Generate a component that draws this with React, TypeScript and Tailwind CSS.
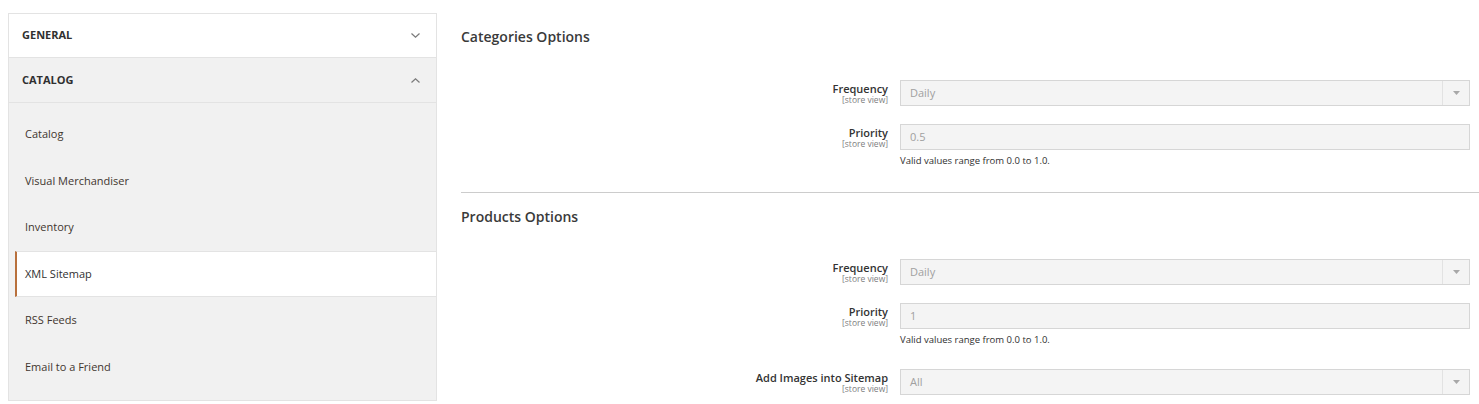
const NAV_ITEMS = [
  { label: "Catalog" },
  { label: "Visual Merchandiser" },
  { label: "Inventory" },
  { label: "XML Sitemap", active: true },
  { label: "RSS Feeds" },
  { label: "Email to a Friend" },
];

function Chevron({ up }: { up?: boolean }) {
  return (
    <svg width="9" height="5" viewBox="0 0 9 5" className="mr-[3px]">
      <path
        d={up ? "M0.5 4.5 L4.5 0.8 L8.5 4.5" : "M0.5 0.5 L4.5 4.2 L8.5 0.5"}
        fill="none"
        stroke="#7a7a7a"
        strokeWidth="1.2"
      />
    </svg>
  );
}

function Sidebar() {
  return (
    <div className="w-[429px] shrink-0 ml-2 mt-[13px] border border-[#e3e3e3] self-start">
      {/* General section (collapsed) */}
      <div className="h-[44px] flex items-center justify-between px-[13px] bg-white border-b border-[#e3e3e3]">
        <span className="text-[11px] font-bold text-[#303030]">GENERAL</span>
        <Chevron />
      </div>
      {/* Catalog section (expanded) */}
      <div className="h-[45px] flex items-center justify-between px-[13px] bg-[#f1f1f1] border-b border-[#e3e3e3]">
        <span className="text-[11px] font-bold text-[#303030]">CATALOG</span>
        <Chevron up />
      </div>
      <div className="bg-[#f1f1f1] pt-[8px] pb-[10px]">
        {NAV_ITEMS.map((item) =>
          item.active ? (
            <div
              key={item.label}
              className="h-[46.5px] ml-[6px] flex items-center pl-[8px] bg-white border-l-[2px] border-[#b8703c] border-y border-y-[#e3e3e3]"
            >
              <span className="text-[11px] text-[#303030] font-medium">{item.label}</span>
            </div>
          ) : (
            <div key={item.label} className="h-[46.5px] flex items-center pl-[16px]">
              <span className="text-[11px] text-[#41362f]">{item.label}</span>
            </div>
          )
        )}
      </div>
    </div>
  );
}

function FieldLabel({ label }: { label: string }) {
  return (
    <div className="w-[439px] shrink-0 pr-[12px] flex flex-col items-end">
      <span className="text-[11px] font-semibold text-[#333333] leading-[12px]">{label}</span>
      <span className="text-[8.5px] text-[#808080] leading-[9px]">[store view]</span>
    </div>
  );
}

function SelectField({ label, value }: { label: string; value: string }) {
  return (
    <div className="flex items-center">
      <FieldLabel label={label} />
      <div className="flex-1 mr-[9px] h-[26px] flex items-center bg-[#f4f4f4] border border-[#d6d6d6]">
        <span className="flex-1 pl-[9px] text-[11px] text-[#a0a0a0]">{value}</span>
        <div className="w-[27px] h-full border-l border-[#e2e2e2] flex items-center justify-center">
          <svg width="7" height="4" viewBox="0 0 7 4">
            <path d="M0 0 L7 0 L3.5 4 Z" fill="#a8a8a8" />
          </svg>
        </div>
      </div>
    </div>
  );
}

function InputField({ label, value, hint }: { label: string; value: string; hint?: string }) {
  return (
    <div>
      <div className="flex items-center">
        <FieldLabel label={label} />
        <div className="flex-1 mr-[9px] h-[26px] flex items-center bg-[#f4f4f4] border border-[#d6d6d6]">
          <span className="pl-[9px] text-[11px] text-[#a0a0a0]">{value}</span>
        </div>
      </div>
      {hint && (
        <div className="pl-[439px] pt-[4px] text-[9.5px] text-[#303030] leading-[13px]">{hint}</div>
      )}
    </div>
  );
}

export default function App() {
  return (
    <div
      className="w-[1479px] h-[404px] overflow-hidden bg-white flex"
      style={{ fontFamily: '"Open Sans", "Noto Sans", sans-serif' }}
    >
      <Sidebar />
      <div className="flex-1 pl-[24px] pt-[27px]">
        {/* Categories Options */}
        <h2 className="text-[14px] font-semibold text-[#3a3a3a] leading-[20px]">Categories Options</h2>
        <div className="pt-[33px] flex flex-col gap-[18px]">
          <SelectField label="Frequency" value="Daily" />
          <InputField label="Priority" value="0.5" hint="Valid values range from 0.0 to 1.0." />
        </div>
        <div className="mt-[25px] border-t border-[#cccccc]" />
        {/* Products Options */}
        <h2 className="mt-[14px] text-[14px] font-semibold text-[#3a3a3a] leading-[20px]">Products Options</h2>
        <div className="pt-[32px] flex flex-col gap-[18px]">
          <SelectField label="Frequency" value="Daily" />
          <InputField label="Priority" value="1" hint="Valid values range from 0.0 to 1.0." />
          <div className="pt-[5px]">
            <SelectField label="Add Images into Sitemap" value="All" />
          </div>
        </div>
      </div>
    </div>
  );
}
